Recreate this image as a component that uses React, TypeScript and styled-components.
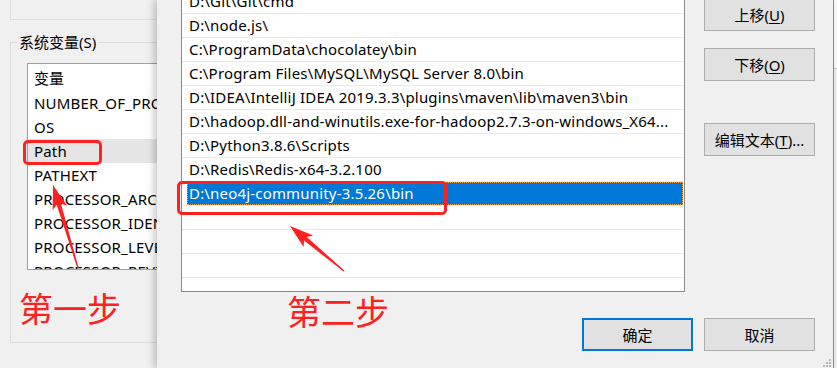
import React from "react";
import styled, { createGlobalStyle, css } from "styled-components";

const uiFont = `"Noto Sans", "Noto Sans CJK SC", sans-serif`;
const red = "#ff2020";

const GlobalStyle = createGlobalStyle`
  html, body {
    margin: 0;
    padding: 0;
    background: #f0f0f0;
    overflow: hidden;
  }
  * {
    box-sizing: border-box;
  }
`;

const Screen = styled.div`
  position: relative;
  width: 837px;
  height: 368px;
  overflow: hidden;
  display: flex;
  background: #f0f0f0;
  font-family: ${uiFont};
  font-size: 15px;
  color: #000;
`;

// ---- back window (环境变量) ----

const BackWindow = styled.div`
  flex: none;
  width: 157px;
  overflow: hidden;
  display: flex;
  flex-direction: column;
`;

const UserGroupTail = styled.div`
  flex: none;
  margin-left: 10px;
  height: 20px;
  border-left: 1px solid #dcdcdc;
  border-bottom: 1px solid #dcdcdc;
`;

const GroupBox = styled.fieldset`
  flex: none;
  margin: 12px 0 0 10px;
  padding: 11px 0 0 6px;
  height: 311px;
  min-width: 0;
  border: 1px solid #dcdcdc;
  border-right: none;
`;

const GroupLegend = styled.legend`
  padding: 0 2px;
  line-height: 20px;
`;

const VarList = styled.div`
  margin-left: 10px;
  width: 190px;
  height: 207px;
  background: #fff;
  border: 1px solid #a0a0a0;
  overflow: hidden;
`;

const VarHeader = styled.div`
  height: 27px;
  line-height: 29px;
  padding-left: 6px;
`;

const VarRow = styled.div<{ $selected?: boolean }>`
  height: 24px;
  line-height: 24px;
  padding-left: 6px;
  white-space: nowrap;
  letter-spacing: 0.18px;
  background: ${(p) => (p.$selected ? "#e5e5e5" : "transparent")};
`;

// ---- front dialog (编辑环境变量) ----

const Dialog = styled.div`
  position: relative;
  z-index: 1;
  flex: none;
  width: 677px;
  display: flex;
  flex-direction: column;
  padding: 0 18px 0 24px;
  background: #f0f0f0;
  border-right: 1px solid #8a8a8a;
  box-shadow: -3px 0 7px rgba(0, 0, 0, 0.22);
`;

const MainRow = styled.div`
  display: flex;
  align-items: flex-start;
  gap: 19px;
  margin-top: -11px;
`;

const PathList = styled.div`
  flex: none;
  width: 504px;
  height: 303px;
  background: #fff;
  border: 1px solid #8a8a8a;
  overflow: hidden;
`;

const PathRow = styled.div`
  display: flex;
  height: 24px;
  padding: 0 1px 0 5px;
  border-bottom: 1px solid #ebebeb;
`;

const PathLabel = styled.span<{ $selected?: boolean }>`
  flex: 1;
  min-width: 0;
  padding-left: 2px;
  line-height: 23px;
  letter-spacing: 0.18px;
  white-space: nowrap;
  overflow: hidden;
  ${(p) =>
    p.$selected &&
    css`
      background: #0078d7;
      color: #fff;
      outline: 1px dotted #e8a050;
      outline-offset: -1px;
    `}
`;

const SideButtons = styled.div`
  flex: none;
  display: flex;
  flex-direction: column;
  padding-top: 9px;
`;

const Button = styled.button<{ $primary?: boolean; $space?: number }>`
  width: 111px;
  height: 33px;
  margin: ${(p) => p.$space ?? 0}px 0 0;
  padding: 0;
  background: #e1e1e1;
  border: ${(p) => (p.$primary ? "2px solid #0078d7" : "1px solid #adadad")};
  font-family: ${uiFont};
  font-size: 15px;
  color: #000;
  u {
    text-underline-offset: 2px;
  }
`;

const BottomRow = styled.div`
  display: flex;
  justify-content: flex-end;
  gap: 11px;
  margin-top: 26px;
`;

const Grip = styled.svg`
  position: absolute;
  right: 2px;
  bottom: 1px;
`;

const EdgeStrip = styled.div`
  flex: none;
  width: 3px;
  display: flex;
  flex-direction: column;
`;

const EdgeTop = styled.div`
  height: 69px;
  background: #fafafa;
  border-bottom: 1px solid #c8c8c8;
`;

// ---- red annotations drawn over the screenshot ----

const Overlay = styled.div`
  position: absolute;
  inset: 0;
  z-index: 5;
  pointer-events: none;
`;

const Mark = styled.div<{ $x: number; $y: number; $w: number; $h: number }>`
  position: absolute;
  left: ${(p) => p.$x}px;
  top: ${(p) => p.$y}px;
  width: ${(p) => p.$w}px;
  height: ${(p) => p.$h}px;
  border: 3px solid ${red};
  border-radius: 5px;
`;

const StepLabel = styled.div<{ $x: number; $y: number }>`
  position: absolute;
  left: ${(p) => p.$x}px;
  top: ${(p) => p.$y}px;
  font-family: "Noto Sans CJK SC", sans-serif;
  font-size: 34px;
  line-height: 1;
  color: ${red};
  white-space: nowrap;
`;

const ArrowLayer = styled.svg`
  position: absolute;
  inset: 0;
`;

const arrowPoints = (x1: number, y1: number, x2: number, y2: number) => {
  const dx = x2 - x1;
  const dy = y2 - y1;
  const len = Math.hypot(dx, dy);
  const ux = dx / len;
  const uy = dy / len;
  const nx = -uy;
  const ny = ux;
  const head = 22;
  const neckX = x2 - ux * head;
  const neckY = y2 - uy * head;
  const p = (x: number, y: number) => `${x.toFixed(1)},${y.toFixed(1)}`;
  return [
    p(x1 + nx * 0.6, y1 + ny * 0.6),
    p(neckX + nx * 2.2 + ux * 2, neckY + ny * 2.2 + uy * 2),
    p(neckX + nx * 7.5 - ux * 2, neckY + ny * 7.5 - uy * 2),
    p(x2, y2),
    p(neckX - nx * 7.5 - ux * 2, neckY - ny * 7.5 - uy * 2),
    p(neckX - nx * 2.2 + ux * 2, neckY - ny * 2.2 + uy * 2),
    p(x1 - nx * 0.6, y1 - ny * 0.6),
  ].join(" ");
};

const systemVars = [
  "NUMBER_OF_PROCESSORS",
  "OS",
  "Path",
  "PATHEXT",
  "PROCESSOR_ARCHITECTURE",
  "PROCESSOR_IDENTIFIER",
  "PROCESSOR_LEVEL",
  "PROCESSOR_REVISION",
];

const paths = [
  "D:\\Git\\Git\\cmd",
  "D:\\node.js\\",
  "C:\\ProgramData\\chocolatey\\bin",
  "C:\\Program Files\\MySQL\\MySQL Server 8.0\\bin",
  "D:\\IDEA\\IntelliJ IDEA 2019.3.3\\plugins\\maven\\lib\\maven3\\bin",
  "D:\\hadoop.dll-and-winutils.exe-for-hadoop2.7.3-on-windows_X64...",
  "D:\\Python3.8.6\\Scripts",
  "D:\\Redis\\Redis-x64-3.2.100",
  "D:\\neo4j-community-3.5.26\\bin",
  "",
  "",
  "",
  "",
];

export default function App() {
  return (
    <>
      <GlobalStyle />
      <Screen>
        <BackWindow>
          <UserGroupTail />
          <GroupBox>
            <GroupLegend>系统变量(S)</GroupLegend>
            <VarList>
              <VarHeader>变量</VarHeader>
              {systemVars.map((name) => (
                <VarRow key={name} $selected={name === "Path"}>
                  {name}
                </VarRow>
              ))}
            </VarList>
          </GroupBox>
        </BackWindow>

        <Dialog>
          <MainRow>
            <PathList>
              {paths.map((path, i) => (
                <PathRow key={i}>
                  <PathLabel $selected={i === 8}>{path}</PathLabel>
                </PathRow>
              ))}
            </PathList>
            <SideButtons>
              <Button>
                上移(<u>U</u>)
              </Button>
              <Button $space={17}>
                下移(<u>O</u>)
              </Button>
              <Button $space={42}>
                编辑文本(<u>T</u>)...
              </Button>
            </SideButtons>
          </MainRow>
          <BottomRow>
            <Button $primary>确定</Button>
            <Button>取消</Button>
          </BottomRow>
          <Grip width="8" height="8" viewBox="0 0 8 8">
            <rect x="6" y="0" width="2" height="2" fill="#b4b4b4" />
            <rect x="3" y="3" width="2" height="2" fill="#b4b4b4" />
            <rect x="6" y="3" width="2" height="2" fill="#b4b4b4" />
            <rect x="0" y="6" width="2" height="2" fill="#b4b4b4" />
            <rect x="3" y="6" width="2" height="2" fill="#b4b4b4" />
            <rect x="6" y="6" width="2" height="2" fill="#b4b4b4" />
          </Grip>
        </Dialog>

        <EdgeStrip>
          <EdgeTop />
        </EdgeStrip>

        <Overlay>
          <Mark $x={23} $y={140} $w={79} $h={25} />
          <Mark $x={177} $y={181} $w={270} $h={34} />
          <ArrowLayer width="837" height="368" viewBox="0 0 837 368">
            <polygon points={arrowPoints(78, 268, 53, 185)} fill={red} />
            <polygon points={arrowPoints(344, 271, 290, 226)} fill={red} />
          </ArrowLayer>
          <StepLabel $x={19} $y={291}>
            第一步
          </StepLabel>
          <StepLabel $x={287} $y={294}>
            第二步
          </StepLabel>
        </Overlay>
      </Screen>
    </>
  );
}
